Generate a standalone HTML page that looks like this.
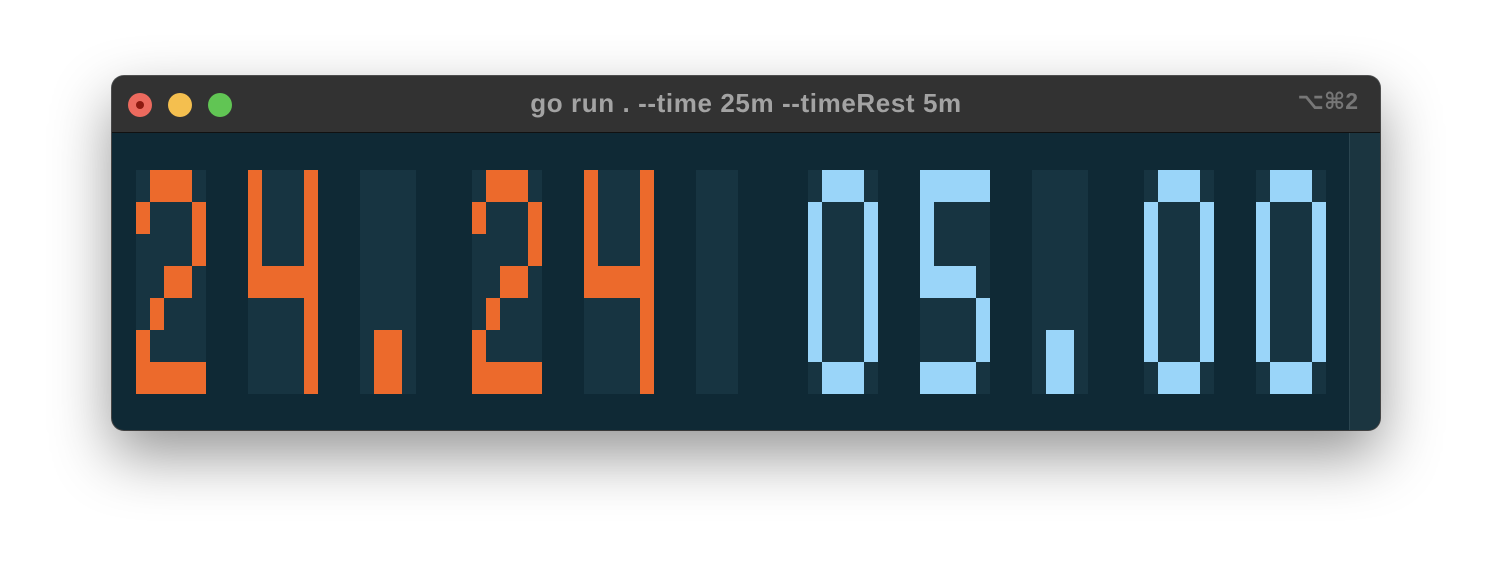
<!DOCTYPE html>
<html><head><meta charset="utf-8"><style>
html,body{margin:0;padding:0;width:1492px;height:578px;background:#fff;overflow:hidden}
.win{position:absolute;left:112px;top:76px;width:1268px;height:354px;border-radius:12px;background:#0f2935;box-shadow:0 25px 60px rgba(0,0,0,.42),0 0 0 1px #555;overflow:hidden}
.tb{position:absolute;left:0;top:0;width:100%;height:56px;background:#323232;border-bottom:1px solid #111}
.dot{position:absolute;top:17px;width:24px;height:24px;border-radius:50%}
.title{position:absolute;left:0;width:100%;top:12px;text-align:center;font:bold 26px "Liberation Sans",sans-serif;letter-spacing:0.6px;color:#a3a3a3}
.kb{position:absolute;right:22px;top:12px;font:bold 23px "Liberation Sans","DejaVu Sans",sans-serif;color:#777}
.sb{position:absolute;right:0;top:57px;width:30px;bottom:0;background:#1b3540;border-left:1px solid #2a4550}
.c{position:absolute;top:94px;height:224px;background:#173441}
.p{position:absolute;width:14px;height:32px}
</style></head><body>
<div class="win">
 <div class="tb">
  <div class="dot" style="left:16px;background:#ec6a5e"><div style="position:absolute;left:8px;top:8px;width:8px;height:8px;border-radius:50%;background:#8d1a10"></div></div>
  <div class="dot" style="left:56px;background:#f4bf4f"></div>
  <div class="dot" style="left:96px;background:#61c554"></div>
  <div class="title">go run . --time 25m --timeRest 5m</div>
  <div class="kb">⌥⌘2</div>
 </div>
 <div class="sb"></div>
 <div id="d"></div>
</div>
<script>
var G={
'2':["01110","10001","00001","00110","01000","10000","11111"],
'4':["10001","10001","10001","11111","00001","00001","00001"],
'0':["01110","10001","10001","10001","10001","10001","01110"],
'5':["11111","10000","10000","11110","00001","00001","11110"],
'.':["0000","0000","0000","0000","0000","0110","0110"],
' ':["000","000","000","000","000","000","000"]};
var items=[['2',136,'#ec6a2c'],['4',248,'#ec6a2c'],['.',360,'#ec6a2c'],['2',472,'#ec6a2c'],['4',584,'#ec6a2c'],[' ',696,''],
['0',808,'#9ad5f9'],['5',920,'#9ad5f9'],['.',1032,'#9ad5f9'],['0',1144,'#9ad5f9'],['0',1256,'#9ad5f9']];
var h='';
items.forEach(function(it){var g=G[it[0]],x=it[1]-112;
h+='<div class="c" style="left:'+x+'px;width:'+(g[0].length*14)+'px">';
g.forEach(function(r,ri){for(var i=0;i<r.length;i++)if(r[i]=='1')h+='<div class="p" style="left:'+(i*14)+'px;top:'+(ri*32)+'px;background:'+it[2]+'"></div>';});
h+='</div>';});
document.getElementById('d').innerHTML=h;
</script>
</body></html>
